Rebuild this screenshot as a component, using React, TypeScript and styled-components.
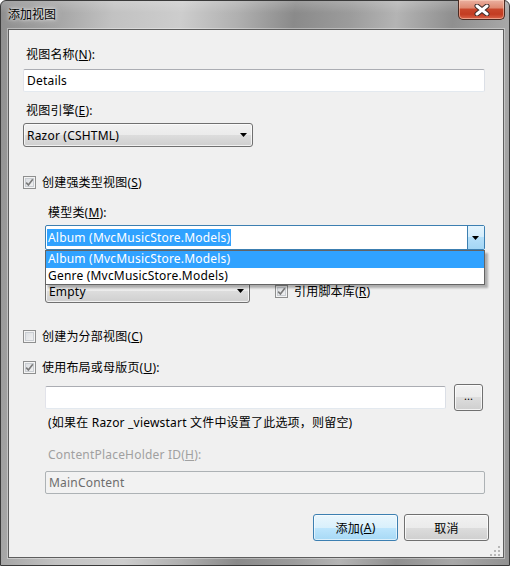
import React from "react";
import styled, { createGlobalStyle } from "styled-components";

const Global = createGlobalStyle`
  html, body { margin: 0; padding: 0; width: 510px; height: 566px; overflow: hidden; background: #fff; }
  #root { width: 510px; height: 566px; }
  * { box-sizing: border-box; }
`;

const FONT = `"Segoe UI", "Noto Sans", "Noto Sans CJK SC", sans-serif`;

const Win = styled.div`
  width: 510px;
  height: 566px;
  display: flex;
  flex-direction: column;
  border: 1px solid #3a3a3a;
  border-radius: 6px 6px 0 0;
  font-family: ${FONT};
  font-size: 12px;
  letter-spacing: 0.2px;
  color: #000;
  background:
    linear-gradient(180deg, rgba(255,255,255,0.18) 0px, rgba(255,255,255,0) 12px),
    linear-gradient(96deg, #8e8e8e 0%, #a4a4a4 10%, #c2c2c2 20%, #cdcdcd 32%, #b0b0b0 42%, #8a8a8a 52%, #9c9c9c 62%, #b4b4b4 70%, #8f8f8f 80%, #a8a8a8 90%, #929292 100%);
`;

const TitleBar = styled.div`
  height: 28px;
  flex: none;
  display: flex;
  align-items: flex-start;
  justify-content: space-between;
  padding-left: 7px;
`;

const Title = styled.div`
  margin-top: 6px;
  font-size: 12px;
  line-height: 16px;
  letter-spacing: 0;
  color: #000;
  text-shadow: 0 0 6px rgba(255,255,255,0.9), 0 0 3px rgba(255,255,255,0.9);
`;

const Close = styled.div`
  width: 47px;
  height: 20px;
  margin-right: 4px;
  margin-top: -1px;
  border: 1px solid #4b2a22;
  border-top: none;
  border-radius: 0 0 5px 5px;
  background: linear-gradient(180deg, #eab0a0 0%, #df8a72 40%, #c8462b 50%, #c33c22 75%, #d9644a 100%);
  box-shadow: inset 0 0 0 1px rgba(255,220,200,0.5);
  display: flex;
  align-items: center;
  justify-content: center;
`;

const Client = styled.div`
  position: relative;
  flex: 1;
  margin: 0 5px 7px 7px;
  border: 1px solid #5e5e5e;
  box-shadow: 0 0 0 1px rgba(255,255,255,0.35);
  background: #f0f0f0;
  padding: 0 18px 0 14px;
  display: flex;
  flex-direction: column;
`;

const Label = styled.div<{ $mt: number; $disabled?: boolean }>`
  margin-top: ${(p) => p.$mt}px;
  height: 16px;
  line-height: 16px;
  padding-left: 3px;
  white-space: nowrap;
  color: ${(p) => (p.$disabled ? "#a0a0a0" : "#000")};
`;

const Key = styled.span`
  text-decoration: underline;
  text-underline-offset: 1px;
`;

const TextBox = styled.div<{ $mt?: number; $w?: number; $disabled?: boolean }>`
  margin-top: ${(p) => p.$mt ?? 0}px;
  width: ${(p) => (p.$w ? `${p.$w}px` : "100%")};
  height: 23px;
  line-height: 21px;
  padding-left: 3px;
  border: 1px solid ${(p) => (p.$disabled ? "#adb2b5" : "#abadb3")};
  border-color: ${(p) => (p.$disabled ? "#adb2b5" : "#abadb3 #dbdfe6 #e3e9ef #e2e3ea")};
  border-radius: 2px;
  background: ${(p) => (p.$disabled ? "#f2f2f2" : "#fff")};
  color: ${(p) => (p.$disabled ? "#6d6d6d" : "#000")};
  white-space: nowrap;
`;

const Select = styled.div<{ $mt?: number; $w: number }>`
  margin-top: ${(p) => p.$mt ?? 0}px;
  width: ${(p) => p.$w}px;
  height: 24px;
  flex: none;
  border: 1px solid #707070;
  border-radius: 3px;
  background: linear-gradient(180deg, #f2f2f2 0%, #ebebeb 50%, #dddddd 50%, #cfcfcf 100%);
  box-shadow: inset 0 0 0 1px rgba(255,255,255,0.7);
  display: flex;
  align-items: center;
  justify-content: space-between;
  padding: 0 4px 0 3px;
  white-space: nowrap;
`;

const Arrow = () => (
  <svg width="8" height="4" viewBox="0 0 8 4">
    <path d="M0 0 H7 L3.5 4 Z" fill="#000" />
  </svg>
);

const CheckRow = styled.div<{ $mt: number }>`
  margin-top: ${(p) => p.$mt}px;
  height: 16px;
  display: flex;
  align-items: center;
  gap: 6px;
  white-space: nowrap;
`;

const Box = styled.div`
  width: 13px;
  height: 13px;
  flex: none;
  border: 1px solid #8e8f8f;
  background: linear-gradient(135deg, #d8dbdf 0%, #f4f4f4 100%);
  box-shadow: inset 0 0 0 1px #f4f4f4, inset 0 0 0 2px #c9cdd2;
  display: flex;
  align-items: center;
  justify-content: center;
`;

const Check = ({ on }: { on: boolean }) => (
  <Box>
    {on && (
      <svg width="9" height="9" viewBox="0 0 9 9">
        <path d="M1.2 4.6 L3.4 7 L7.8 1.2" fill="none" stroke="#7a7a7a" strokeWidth="1.6" />
      </svg>
    )}
  </Box>
);

const Indent = styled.div`
  margin-left: 22px;
  display: flex;
  flex-direction: column;
`;

const ComboWrap = styled.div<{ $mt: number }>`
  position: relative;
  margin-top: ${(p) => p.$mt}px;
  height: 25px;
  z-index: 2;
`;

const Combo = styled.div`
  height: 25px;
  border: 1px solid #3c7fb1;
  border-radius: 2px;
  background: #fff;
  display: flex;
  align-items: center;
  padding-left: 1px;
`;

const ComboText = styled.div`
  flex: 1;
  line-height: 17px;
  height: 17px;
  white-space: nowrap;
`;

const Sel = styled.span`
  background: #30a2ff;
  color: #fff;
  padding: 0 1px;
`;

const ComboBtn = styled.div`
  width: 17px;
  height: 23px;
  border-left: 1px solid #3c7fb1;
  background: linear-gradient(180deg, #e4f4fd 0%, #d3edfc 50%, #b5dff9 50%, #a3d6f5 100%);
  display: flex;
  align-items: center;
  justify-content: center;
`;

const DropList = styled.div`
  position: absolute;
  top: 100%;
  left: 0;
  right: 0;
  height: 35px;
  border: 1px solid #646464;
  background: #fff;
  box-shadow: 3px 3px 2px rgba(0,0,0,0.28);
  padding: 0;
`;

const Item = styled.div<{ $active?: boolean }>`
  height: 16.5px;
  line-height: 16px;
  padding-left: 2px;
  white-space: nowrap;
  background: ${(p) => (p.$active ? "#30a2ff" : "transparent")};
  color: ${(p) => (p.$active ? "#fff" : "#000")};
`;

const Row = styled.div<{ $mt: number; $gap: number }>`
  margin-top: ${(p) => p.$mt}px;
  display: flex;
  align-items: center;
  gap: ${(p) => p.$gap}px;
`;

const Button = styled.div<{ $w: number; $h: number; $default?: boolean }>`
  width: ${(p) => p.$w}px;
  height: ${(p) => p.$h}px;
  flex: none;
  border: 1px solid ${(p) => (p.$default ? "#3c7fb1" : "#707070")};
  border-radius: 3px;
  background: ${(p) =>
    p.$default
      ? "linear-gradient(180deg, #eaf6fd 0%, #d9f0fc 50%, #bee6fd 50%, #a7d9f5 100%)"
      : "linear-gradient(180deg, #f2f2f2 0%, #ebebeb 50%, #dddddd 50%, #cfcfcf 100%)"};
  box-shadow: inset 0 0 0 1px ${(p) => (p.$default ? "rgba(255,255,255,0.6)" : "rgba(255,255,255,0.75)")};
  display: flex;
  align-items: center;
  justify-content: center;
  white-space: nowrap;
`;

const Dots = styled.span`
  font-size: 11px;
  line-height: 10px;
  margin-top: -4px;
  letter-spacing: 0;
`;

const ButtonRow = styled.div`
  margin-top: 20px;
  margin-right: -4px;
  display: flex;
  justify-content: flex-end;
  gap: 6px;
`;

const Grip = styled.div`
  position: absolute;
  right: 2px;
  bottom: 2px;
  width: 11px;
  height: 11px;
`;

const CloseX = () => (
  <svg width="16" height="12" viewBox="0 0 16 12">
    <path d="M3 2 L13 10 M13 2 L3 10" stroke="#3a2a28" strokeWidth="5" strokeLinecap="round" />
    <path d="M3 2 L13 10 M13 2 L3 10" stroke="#fff" strokeWidth="3" strokeLinecap="round" />
  </svg>
);

export default function App() {
  return (
    <>
      <Global />
      <Win>
        <TitleBar>
          <Title>添加视图</Title>
          <Close>
            <CloseX />
          </Close>
        </TitleBar>
        <Client>
          <Label $mt={17}>
            视图名称(<Key>N</Key>):
          </Label>
          <TextBox $mt={6}>Details</TextBox>
          <Label $mt={11}>
            视图引擎(<Key>E</Key>):
          </Label>
          <Select $mt={4} $w={230}>
            <span>Razor (CSHTML)</span>
            <Arrow />
          </Select>
          <CheckRow $mt={27}>
            <Check on />
            <span>
              创建强类型视图(<Key>S</Key>)
            </span>
          </CheckRow>
          <Indent>
            <Label $mt={15}>
              模型类(<Key>M</Key>):
            </Label>
            <ComboWrap $mt={4}>
              <Combo>
                <ComboText>
                  <Sel>Album (MvcMusicStore.Models)</Sel>
                </ComboText>
                <ComboBtn>
                  <Arrow />
                </ComboBtn>
              </Combo>
              <DropList>
                <Item $active>Album (MvcMusicStore.Models)</Item>
                <Item>Genre (MvcMusicStore.Models)</Item>
              </DropList>
            </ComboWrap>
            <Row $mt={29} $gap={25}>
              <Select $w={205}>
                <span>Empty</span>
                <Arrow />
              </Select>
              <CheckRow $mt={0}>
                <Check on />
                <span>
                  引用脚本库(<Key>R</Key>)
                </span>
              </CheckRow>
            </Row>
          </Indent>
          <CheckRow $mt={25}>
            <Check on={false} />
            <span>
              创建为分部视图(<Key>C</Key>)
            </span>
          </CheckRow>
          <CheckRow $mt={15}>
            <Check on />
            <span>
              使用布局或母版页(<Key>U</Key>):
            </span>
          </CheckRow>
          <Indent>
            <Row $mt={9} $gap={8}>
              <TextBox $w={401} />
              <Button $w={29} $h={27}>
                <Dots>...</Dots>
              </Button>
            </Row>
            <Label $mt={4}>(如果在 Razor _viewstart 文件中设置了此选项，则留空)</Label>
            <Label $mt={16} $disabled>
              ContentPlaceHolder ID(<Key>H</Key>):
            </Label>
            <TextBox $mt={8} $disabled>
              MainContent
            </TextBox>
          </Indent>
          <ButtonRow>
            <Button $w={85} $h={27} $default>
              添加(<Key>A</Key>)
            </Button>
            <Button $w={85} $h={27}>
              取消
            </Button>
          </ButtonRow>
          <Grip>
            <svg width="11" height="11" viewBox="0 0 11 11">
              {[
                [8, 0],
                [8, 4],
                [4, 4],
                [8, 8],
                [4, 8],
                [0, 8],
              ].map(([x, y], i) => (
                <rect key={i} x={x} y={y} width="2" height="2" fill="#b8b8b8" />
              ))}
            </svg>
          </Grip>
        </Client>
      </Win>
    </>
  );
}
